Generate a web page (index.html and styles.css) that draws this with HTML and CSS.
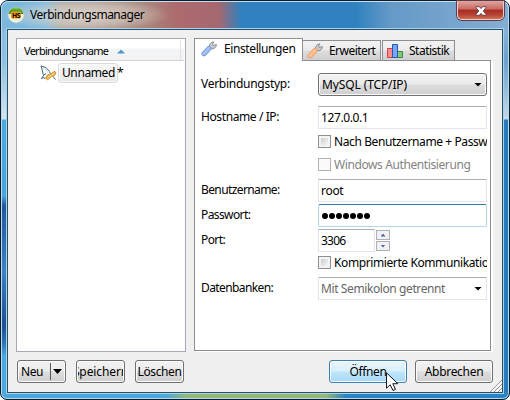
FILE: index.html
```html
<!DOCTYPE html>
<html lang="de">
<head>
<meta charset="utf-8">
<title>Verbindungsmanager</title>
<link rel="stylesheet" href="styles.css">
</head>
<body>
<div class="window">
  <header class="titlebar">
    <svg class="logo" width="16" height="16" viewBox="0 0 16 16"><circle cx="8" cy="8" r="7.8" fill="#f1efdb"/><path d="M.3 7A7.8 7.8 0 0 1 15.7 7Z" fill="#4f9c2a"/><path d="M3 2.5A7.6 7.6 0 0 1 13 2.5Z" fill="#7cc04a"/><rect x="3" y="4.5" width="10" height="7" rx="1" fill="#f39b17"/><text x="4" y="10.6" font-size="6.5" font-weight="700" textLength="8" lengthAdjust="spacingAndGlyphs">HS</text></svg>
    <h1 class="title">Verbindungsmanager</h1>
    <button class="close" aria-label="Schließen"><svg width="12" height="10" viewBox="0 0 12 10"><path d="M1 .7H4.4L6 2.6 7.6.7H11V1.7L8.3 5 11 8.3V9.3H7.6L6 7.4 4.4 9.3H1V8.3L3.7 5 1 1.7Z" fill="#fff" stroke="#603b43" stroke-width=".9"/></svg></button>
  </header>
  <main class="client">
    <div class="panes">
      <section class="list">
        <div class="list-head"><span class="t-col">Verbindungsname</span><svg width="8" height="5" viewBox="0 0 8 5"><path d="M0 4.5L4 .5 8 4.5Z" fill="#4c9ac4"/></svg></div>
        <div class="list-row">
          <svg width="17" height="16" viewBox="0 0 17 16"><path d="M1 1L6 2.5 9.5 6.5 10.5 9M1 1L2.5 6 3.5 10.5 1.5 13.5 4 12.5 5 14M3.5 10.5L6 8.5M13 11.5L15.5 14.5" fill="none" stroke="#47677c"/><path d="M2.5 2.5L6 4.5 8 8" stroke="#b8d5e4" fill="none"/><path d="M5.5 13L7.5 10 11.5 8.5 14.5 6 16 8 14.5 10.5 10.5 12.2 7.5 15Z" fill="#f5b54b" stroke="#c77c20" stroke-width=".8"/><path d="M8 12L12 10 14.5 8" stroke="#ffe19b" fill="none"/></svg>
          <span class="item"><span class="t-item">Unnamed</span></span><span class="star">*</span>
        </div>
      </section>
      <section class="tabs">
        <nav class="tabbar">
          <div class="tab active"><svg class="tool" width="16" height="16" viewBox="0 0 16 16"><path d="M8.5 6.5C8 3.5 10 .8 13 1L11.5 3 12.3 4.5 15.3 3.5C15.8 6 13 8.5 10 7.6Z" fill="#c8cbce" stroke="#808487" stroke-width=".9"/><path d="M8 7.5L3 12.7" stroke="#6a8dd0" stroke-width="5" stroke-linecap="round"/><path d="M8 7.5L3 12.7" stroke="#a3c0f6" stroke-width="3.6" stroke-linecap="round"/></svg><span class="t-tab1">Einstellungen</span></div>
          <div class="tab second"><svg class="tool" width="16" height="16" viewBox="0 0 16 16"><path d="M8.5 6.5C8 3.5 10 .8 13 1L11.5 3 12.3 4.5 15.3 3.5C15.8 6 13 8.5 10 7.6Z" fill="#c8cbce" stroke="#808487" stroke-width=".9"/><path d="M8 7.5L3 12.7" stroke="#ee9558" stroke-width="5" stroke-linecap="round"/><path d="M8 7.5L3 12.7" stroke="#ffc094" stroke-width="3.6" stroke-linecap="round"/></svg><span class="t-tab2">Erweitert</span></div>
          <div class="tab third"><svg width="16" height="14" viewBox="0 0 16 14"><path d="M.5 4.5H5.5V13.5H.5Z" fill="#fa8c91" stroke="#d83d47"/><path d="M10.5 7.5H15.5V13.5H10.5Z" fill="#86c480" stroke="#3b8c3d"/><path d="M5.5.5H10.5V13.5H5.5Z" fill="#76a7ef" stroke="#2459b7"/></svg><span class="t-tab3">Statistik</span></div>
        </nav>
        <form class="page">
          <label class="l1 t-type">Verbindungstyp:</label><div class="combo f1"><span class="t-mysql">MySQL (TCP/IP)</span><i class="arrow"></i></div>
          <label class="l2 t-host">Hostname / IP:</label><div class="field f2"><span class="t-ip">127.0.0.1</span></div>
          <div class="check f3"><i class="box"></i><span class="t-nach">Nach Benutzername + Passw</span></div>
          <div class="check disabled f4"><i class="box"></i><span class="t-win">Windows Authentisierung</span></div>
          <label class="l5 t-user">Benutzername:</label><div class="field f5"><span class="t-root">root</span></div>
          <label class="l6 t-pass">Passwort:</label><div class="field focus f6"><span class="dots"><i></i><i></i><i></i><i></i><i></i><i></i><i></i></span></div>
          <label class="l7 t-port">Port:</label><div class="port f7"><div class="field"><span class="t-num">3306</span></div><div class="spin"><b><i class="up"></i></b><b><i class="down"></i></b></div></div>
          <div class="check f8"><i class="box"></i><span class="t-komp">Komprimierte Kommunikation</span></div>
          <label class="l9 t-db">Datenbanken:</label><div class="field f9"><span class="t-semi">Mit Semikolon getrennt</span><i class="arrow"></i></div>
        </form>
      </section>
    </div>
    <footer class="actions">
      <button class="btn new"><span class="t-neu">Neu</span><i class="sep"></i><i class="arrow big"></i></button>
      <button class="btn save"><span class="t-save">Speichern</span></button>
      <button class="btn del"><span class="t-del">Löschen</span></button>
      <button class="btn open"><span class="t-open">Öffnen</span></button>
      <button class="btn cancel"><span class="t-cancel">Abbrechen</span></button>
    </footer>
    <svg class="grip" width="12" height="12" viewBox="0 0 12 12"><path d="M0 12L12 0M4 12L12 4M8 12L12 8" stroke="#999"/><path d="M1.5 12L12 1.5M5.5 12L12 5.5M9.5 12L12 9.5" stroke="#fff"/></svg>
  </main>
  <svg class="cursor" width="13" height="20" viewBox="0 0 13 20"><path d="M.5 .8V16.2L4.2 12.8 7 18.5 9.5 17.4 6.8 11.7H11.8Z" fill="#fff" stroke="#151525"/></svg>
</div>
</body>
</html>
```
FILE: styles.css
```css
* { box-sizing: border-box; }
html, body { margin: 0; width: 510px; height: 400px; overflow: hidden; background: #fff; }
body { font: 12px/16px "Noto Sans", "Open Sans", sans-serif; color: #000; letter-spacing: -.4px; }
button { font: inherit; color: inherit; letter-spacing: inherit; }
span, label, h1 { white-space: nowrap; }
.window { position: relative; width: 510px; height: 400px; padding: 0 6px 7px 6px; border: 1px solid #0b1c2c; border-radius: 8px 8px 7px 7px; box-shadow: inset 0 0 0 1px #b4daee; background: linear-gradient(90deg, #4ba8da 0 165px, #94b777 185px 325px, #2983c5 345px) bottom / 100% 7px no-repeat, linear-gradient(#8cbddd 28px, #8fc0e0 60px, #d5e5f0 118px, #4da8dc 119px, #4aa4d8 195px, #24579b 205px, #3a83c2 270px, #204e91 325px, #2c77b1 342px, #4da8dc 355px) left / 7px 100% no-repeat, linear-gradient(#8bb3d7 28px, #6ba0cf 60px, #c5d9ea 118px, #2679bd 119px) right / 7px 100% no-repeat, #3b87bf; }
.titlebar { display: flex; align-items: flex-start; height: 28px; margin: 0 -6px; padding: 0 5px 0 7px; border-radius: 7px 7px 0 0; box-shadow: inset 0 1px #c5dfef, inset 1px 0 #b4daee, inset -1px 0 #b4daee; background: radial-gradient(ellipse 85px 17px at 84px 14px, #eee7ddc0, #e0d8d080 60%, transparent), linear-gradient(90deg, #7bb8dd 0 45px, #a9a39c 60px, #a8857c 145px, #ad6b6d 175px, #a56770 218px, #2f82bf 240px 355px, #6599c7 390px, #83add2 500px); }
.logo { margin-top: 6px; flex: none; }
.title { margin: 5px auto 0 6px; font-size: 12px; line-height: 18px; font-weight: 400; letter-spacing: -.5px; }
.close { width: 47px; height: 19px; padding: 2px 0 0; border: 1px solid #efc9c7; border-top: 0; border-radius: 0 0 5px 5px; background: linear-gradient(#dda69f, #c96a61 45%, #a92d23 50%, #b34032 75%, #d26e54); display: flex; align-items: center; justify-content: center; box-shadow: 0 0 0 1px #5a3c4b; }
.client { position: relative; height: 364px; padding: 8px 7px 0 8px; background: #f0f0f0; border: 1px solid #284f69; box-shadow: 0 0 0 1px #a9d4ea; }
.panes { display: flex; gap: 8px; }
.list { width: 170px; height: 314px; border: 1px solid #a5a9b2; background: #fff; padding: 1px; }
.list-head { display: flex; align-items: center; height: 21px; padding: 2px 0 0 6px; gap: 9px; border-bottom: 1px solid #d5d5d5; background: linear-gradient(90deg, transparent 162px, #dfe1e4 162px 163px, transparent 163px), linear-gradient(#fff 40%, #f4f5f7 45%, #f1f2f4); }
.t-col { font-size: 11px; letter-spacing: -.75px; }
.list-row { display: flex; align-items: center; padding: 2px 0 0 22px; height: 22px; }
.item { width: 60px; height: 20px; margin-left: 1px; padding: 0 3px; line-height: 18px; border: 1px solid #d9d9d9; border-radius: 3px; background: linear-gradient(#fafafa, #e6e6e6); box-shadow: inset 0 0 0 1px #fafafa; }
.star { line-height: 16px; margin-left: -1px; }
.tabs { width: 299px; }
.tabbar { display: flex; align-items: flex-end; height: 22px; }
.tab { display: flex; align-items: center; height: 20px; border: 1px solid #8c8e94; border-bottom: 0; background: linear-gradient(#f2f2f2, #ebebeb 48%, #dddddd 52%, #cfcfcf); }
.tab.active { position: relative; width: 109px; height: 23px; margin-bottom: -1px; padding: 0 0 3px 6px; gap: 7px; background: #fff; }
.tab.second { width: 78px; border-left: 0; padding-left: 4px; gap: 6px; letter-spacing: -.55px; }
.tab.third { width: 73px; margin-left: 1px; padding-left: 4px; gap: 6px; letter-spacing: -.5px; }
.page { display: grid; grid-template-columns: 117px 169px; grid-template-rows: 23px 10px 23px 6px 13px 10px 13px 8px 23px 2px 23px 2px 23px 4px 13px 8px 23px; align-items: center; width: 297px; height: 291px; padding: 12px 3px 0 6px; border: 1px solid #8c8e94; background: #fff; box-shadow: 2px 1px #fff; align-content: start; }
.page > label { grid-column: 1; padding-bottom: 1px; }
.page > div { grid-column: 2; }
.l1,.f1{grid-row:1}.l2,.f2{grid-row:3}.f3{grid-row:5}.f4{grid-row:7}.l5,.f5{grid-row:9}.l6,.f6{grid-row:11}.l7,.f7{grid-row:13}.f8{grid-row:15}.l9,.f9{grid-row:17}
.combo, .field { display: flex; align-items: center; justify-content: space-between; width: 169px; height: 23px; padding: 0 4px 0 3px; }
.field { border: 1px solid #e2e6ee; border-top-color: #abadb3; border-radius: 1px; }
.combo { border: 1px solid #707070; border-radius: 3px; background: linear-gradient(#f2f2f2, #ebebeb 48%, #dddddd 52%, #cfcfcf); box-shadow: inset 0 0 0 1px #fbfbfb; }
.focus { border-color: #b5d5ea; border-top-color: #3d7bad; border-radius: 2px; }
.arrow { width: 8px; height: 4px; background: #000; clip-path: polygon(0 0, 100% 0, 50% 100%); flex: none; }
.check { display: flex; align-items: center; gap: 3px; width: 169px; height: 16px; overflow: hidden; }
.box { flex: none; width: 13px; height: 13px; border: 1px solid #8e8f8f; background: linear-gradient(135deg, #cbcfd5, #f6f6f6) content-box, #f4f4f4; padding: 2px; }
.disabled { color: #838383; }
.disabled .box { border-color: #b1b1b1; background: #fafafa; }
.t-type { letter-spacing: -.27px; }
.t-mysql { letter-spacing: -.12px; }
.t-user, .t-pass, .t-port, .t-db { letter-spacing: -.6px; }
.t-ip { margin-left: -1px; }
.t-num { margin-left: -1px; letter-spacing: -.8px; }
.t-root { letter-spacing: -.3px; margin-left: -1px; }
.dots { display: flex; gap: 1px; }
.dots i { width: 6px; height: 6px; border-radius: 50%; background: #000; }
.port { display: flex; gap: 1px; }
.port .field { width: 57px; }
.spin { display: grid; gap: 1px; height: 22px; padding-top: 1px; }
.spin b { width: 14px; height: 10px; display: grid; place-items: center; border: 1px solid #adb0b5; background: #f1f1f3; }
.spin i { width: 5px; height: 3px; background: #4c61a5; }
.up { clip-path: polygon(0 100%, 50% 0, 100% 100%); }
.down { clip-path: polygon(0 0, 100% 0, 50% 100%); }
.t-semi { color: #666; margin-left: -1px; }
.actions { display: flex; padding: 8px 0 0 1px; }
.btn { display: flex; align-items: center; justify-content: center; width: 49px; height: 23px; margin: 0 10px 0 0; padding: 0 1px; overflow: hidden; border: 1px solid #707070; border-radius: 3px; background: linear-gradient(#f2f2f2, #ebebeb 48%, #dddddd 52%, #cfcfcf); box-shadow: inset 0 0 0 1px #fbfbfb; }
.t-save { display: flex; justify-content: center; width: 45px; overflow: hidden; letter-spacing: -.1px; }
.sep { width: 1px; height: 17px; margin: 0 2px 0 7px; background: #555; }
.big { width: 9px; height: 5px; }
.btn.open { width: 78px; margin-left: 135px; margin-right: 8px; border-color: #3c7fb1; background: linear-gradient(#eaf6fd, #d9f0fc 48%, #bee6fd 52%, #a7d9f5); }
.btn.cancel { width: 78px; margin-right: 0; letter-spacing: -.3px; }
.grip { position: absolute; right: 0; bottom: 0; }
.cursor { position: absolute; left: 385px; top: 371px; }
```
